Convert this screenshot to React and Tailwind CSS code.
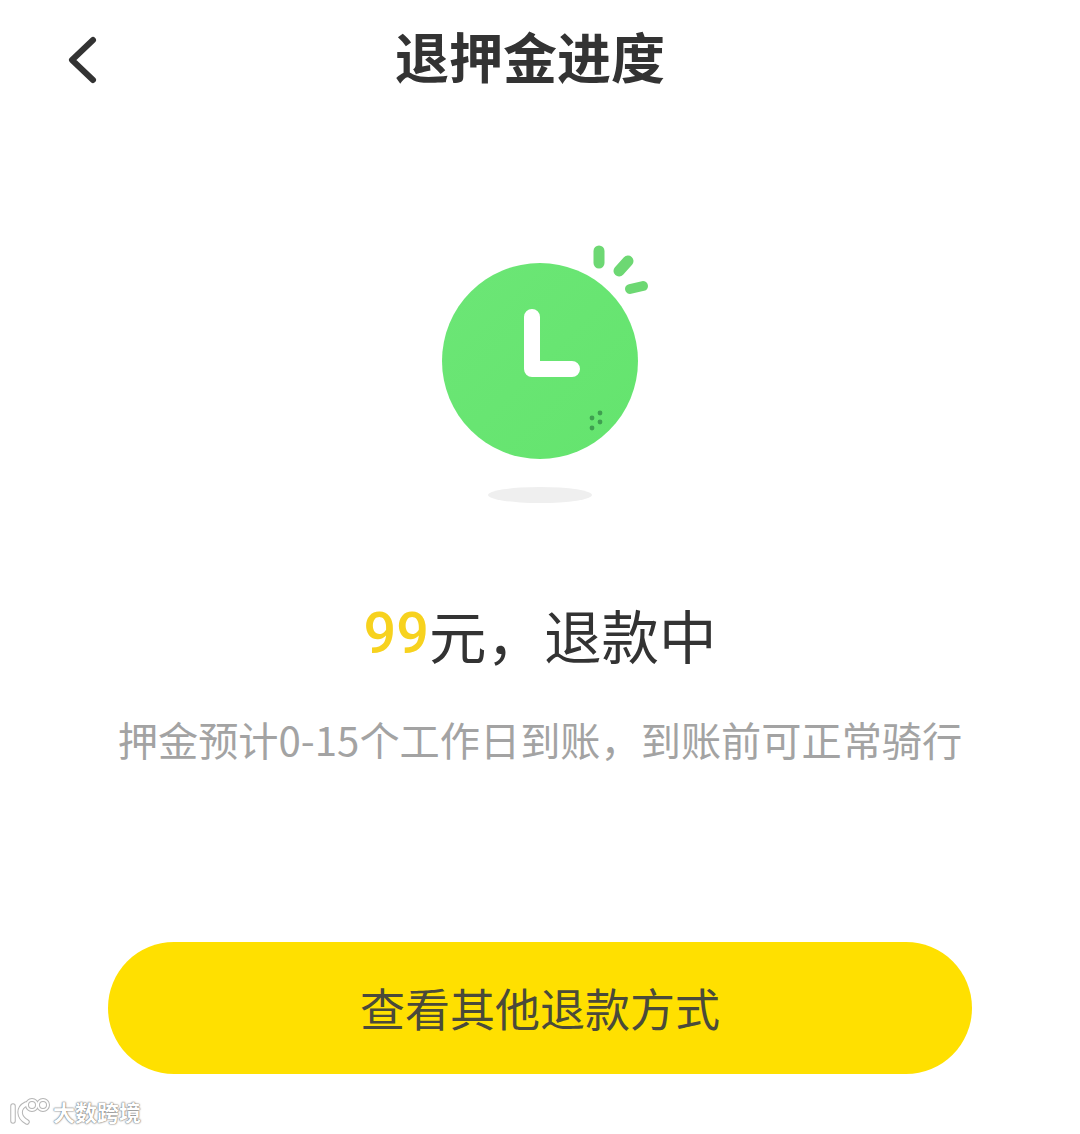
const cjk = { fontFamily: '"Noto Sans CJK SC", "Noto Sans", sans-serif' };

const App = () => {
  return (
    <div className="relative w-[1080px] h-[1134px] bg-white overflow-hidden" style={cjk}>
      {/* header */}
      <div className="relative flex items-center justify-center h-[118px]">
        <svg className="absolute left-[64px] top-[34px]" width="40" height="52" viewBox="0 0 40 52" fill="none">
          <path d="M29 6 L8 26 L29 46" stroke="#333" strokeWidth="6" strokeLinecap="round" strokeLinejoin="round" />
        </svg>
        <span className="text-[54px] leading-none font-bold text-[#333] ml-[-20px] mt-[-6px]">退押金进度</span>
      </div>

      {/* clock */}
      <div className="flex justify-center mt-[127px]">
        <svg width="230" height="264" viewBox="0 0 230 264" fill="none">
          <defs>
            <linearGradient id="clockFill" x1="0" y1="0" x2="1" y2="1">
              <stop offset="0" stopColor="#6ce676" />
              <stop offset="1" stopColor="#64e46e" />
            </linearGradient>
          </defs>
          <circle cx="115" cy="116" r="98" fill="url(#clockFill)" />
          <path d="M107 72 V124 H147" stroke="#fff" strokeWidth="16" strokeLinecap="round" strokeLinejoin="round" />
          <path d="M174 6 L174 18" stroke="#6dd873" strokeWidth="11" strokeLinecap="round" />
          <path d="M203 16 L194 26" stroke="#6dd873" strokeWidth="11" strokeLinecap="round" />
          <path d="M218 41 L205 44" stroke="#6dd873" strokeWidth="10" strokeLinecap="round" />
          <circle cx="167" cy="173" r="2.4" fill="#3f9f50" />
          <circle cx="175" cy="168" r="2.4" fill="#3f9f50" />
          <circle cx="167" cy="183" r="2.4" fill="#3f9f50" />
          <circle cx="175" cy="177" r="2.4" fill="#3f9f50" />
          <ellipse cx="115" cy="250" rx="52" ry="8" fill="#efefef" />
        </svg>
      </div>

      {/* status */}
      <div className="flex justify-center mt-[90px] text-[57.5px] leading-[70px] text-[#333]">
        <span className="text-[#f7d21e] font-medium" style={{ fontFamily: '"Roboto", sans-serif' }}>99</span>
        <span>元，退款中</span>
      </div>
      <div className="text-center mt-[45px] text-[40.2px] leading-[50px] text-[#a3a3a3] whitespace-nowrap">
        押金预计0-15个工作日到账，到账前可正常骑行
      </div>

      {/* button */}
      <div className="flex justify-center mt-[178px]">
        <button className="w-[864px] h-[132px] rounded-full bg-[#ffe000] text-[45px] text-[#4a4a3a]">
          查看其他退款方式
        </button>
      </div>

      {/* watermark */}
      <div className="absolute left-[8px] bottom-[9px] flex items-center gap-[3px] text-white font-bold [text-shadow:0_0_2px_#666,0_0_1px_#666]">
        <svg width="42" height="28" viewBox="0 0 42 28" fill="none">
          <g stroke="#b5b5b5" strokeWidth="5.5" strokeLinecap="round">
            <path d="M5 9 V24" />
            <path d="M18 7 C10 11 10 20 19 25" />
            <circle cx="24" cy="8" r="5" strokeWidth="4" />
            <circle cx="35" cy="8" r="5" strokeWidth="4" />
          </g>
          <g stroke="#fff" strokeWidth="3.5" strokeLinecap="round">
            <path d="M5 9 V24" />
            <path d="M18 7 C10 11 10 20 19 25" />
            <circle cx="24" cy="8" r="5" strokeWidth="2" />
            <circle cx="35" cy="8" r="5" strokeWidth="2" />
          </g>
        </svg>
        <span className="text-[22px] leading-none">大数跨境</span>
      </div>
    </div>
  );
};

export default App;
